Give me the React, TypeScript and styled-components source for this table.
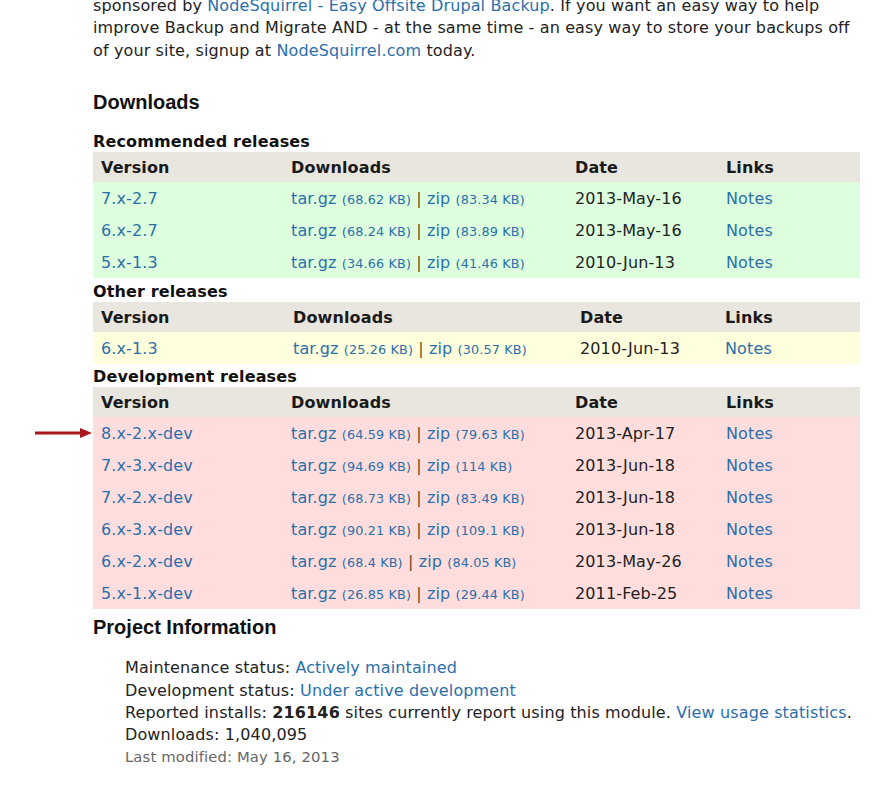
import React from "react";
import styled, { createGlobalStyle } from "styled-components";

const Global = createGlobalStyle`
  html, body { margin: 0; padding: 0; background: #fff; }
  body { font-family: "DejaVu Sans", sans-serif; font-size: 16px; letter-spacing: 0.13px; color: #222; overflow: hidden; }
`;

const Page = styled.div`
  width: 767px;
  margin-left: 93px;
  padding-bottom: 40px;
`;

const Intro = styled.p`
  margin: -5px 0 0;
  line-height: 22.4px;
  width: 767px;
`;

const Link = styled.a`
  color: #2b6faa;
  text-decoration: none;
`;

const H2 = styled.h2<{ $mt: number }>`
  font-family: "Liberation Sans", Arial, sans-serif;
  font-weight: bold;
  font-size: 20px;
  line-height: 24px;
  letter-spacing: 0;
  color: #111;
  margin: ${(p) => p.$mt}px 0 0;
`;

const H3 = styled.h3<{ $mt: number }>`
  font-family: "DejaVu Sans", sans-serif;
  font-weight: bold;
  font-size: 16px;
  line-height: 21px;
  padding-top: 1px;
  color: #111;
  margin: ${(p) => p.$mt}px 0 0;
`;

const Table = styled.table`
  width: 767px;
  border-collapse: collapse;
  table-layout: fixed;
`;

const Th = styled.th`
  background: #e8e6de;
  text-align: left;
  font-weight: bold;
  height: 29px;
  padding: 1px 0 0 8px;
  color: #1a1a1a;
  vertical-align: middle;
`;

const Tr = styled.tr<{ $bg: string }>`
  background: ${(p) => p.$bg};
`;

const Td = styled.td`
  height: 32px;
  padding: 0 0 0 8px;
  vertical-align: middle;
  white-space: nowrap;
  color: #222;
`;

const VersionCell = styled(Td)`
  position: relative;
`;

const Arrow = styled.svg`
  position: absolute;
  left: -58px;
  top: 11px;
`;

const Size = styled.span`
  font-size: 12.8px;
  color: #2b6faa;
`;

const Sep = styled.span`
  color: #6b4a26;
`;

const Info = styled.div`
  margin: 18px 0 0 32px;
  line-height: 22.3px;
`;

const Line = styled.div``;

const Muted = styled.div`
  color: #666;
  font-size: 14.8px;
`;

type Row = { v: string; tg: string; zp: string; date: string; arrow?: boolean };

const recommended: Row[] = [
  { v: "7.x-2.7", tg: "68.62 KB", zp: "83.34 KB", date: "2013-May-16" },
  { v: "6.x-2.7", tg: "68.24 KB", zp: "83.89 KB", date: "2013-May-16" },
  { v: "5.x-1.3", tg: "34.66 KB", zp: "41.46 KB", date: "2010-Jun-13" },
];
const other: Row[] = [{ v: "6.x-1.3", tg: "25.26 KB", zp: "30.57 KB", date: "2010-Jun-13" }];
const dev: Row[] = [
  { v: "8.x-2.x-dev", tg: "64.59 KB", zp: "79.63 KB", date: "2013-Apr-17", arrow: true },
  { v: "7.x-3.x-dev", tg: "94.69 KB", zp: "114 KB", date: "2013-Jun-18" },
  { v: "7.x-2.x-dev", tg: "68.73 KB", zp: "83.49 KB", date: "2013-Jun-18" },
  { v: "6.x-3.x-dev", tg: "90.21 KB", zp: "109.1 KB", date: "2013-Jun-18" },
  { v: "6.x-2.x-dev", tg: "68.4 KB", zp: "84.05 KB", date: "2013-May-26" },
  { v: "5.x-1.x-dev", tg: "26.85 KB", zp: "29.44 KB", date: "2011-Feb-25" },
];

function Releases({ rows, bg, cols }: { rows: Row[]; bg: string; cols: number[] }) {
  return (
    <Table>
      <colgroup>
        {cols.map((w, i) => (
          <col key={i} style={{ width: w }} />
        ))}
      </colgroup>
      <thead>
        <tr>
          <Th>Version</Th>
          <Th>Downloads</Th>
          <Th>Date</Th>
          <Th>Links</Th>
        </tr>
      </thead>
      <tbody>
        {rows.map((r) => (
          <Tr key={r.v} $bg={bg}>
            <VersionCell>
              {r.arrow && (
                <Arrow width="57" height="10" viewBox="0 0 57 10">
                  <line x1="0" y1="5" x2="47" y2="5" stroke="#a8161b" strokeWidth="3" />
                  <polygon points="45,0 57,5 45,10" fill="#a8161b" />
                </Arrow>
              )}
              <Link href="#">{r.v}</Link>
            </VersionCell>
            <Td>
              <Link href="#">tar.gz</Link> <Size>({r.tg})</Size> <Sep>|</Sep>{" "}
              <Link href="#">zip</Link> <Size>({r.zp})</Size>
            </Td>
            <Td>{r.date}</Td>
            <Td>
              <Link href="#">Notes</Link>
            </Td>
          </Tr>
        ))}
      </tbody>
    </Table>
  );
}

export default function App() {
  return (
    <>
      <Global />
      <Page>
        <Intro>
          sponsored by <Link href="#">NodeSquirrel - Easy Offsite Drupal Backup</Link>. If you want an easy way to help
          improve Backup and Migrate AND - at the same time - an easy way to store your backups off of your site, signup
          at <Link href="#">NodeSquirrel.com</Link> today.
        </Intro>
        <H2 $mt={28}>Downloads</H2>
        <H3 $mt={16}>Recommended releases</H3>
        <Releases rows={recommended} bg="#ddffdd" cols={[190, 284, 151, 142]} />
        <H3 $mt={2}>Other releases</H3>
        <Releases rows={other} bg="#ffffdd" cols={[192, 287, 145, 143]} />
        <H3 $mt={1}>Development releases</H3>
        <Releases rows={dev} bg="#ffdddd" cols={[190, 284, 151, 142]} />
        <H2 $mt={6}>Project Information</H2>
        <Info>
          <Line>
            Maintenance status: <Link href="#">Actively maintained</Link>
          </Line>
          <Line>
            Development status: <Link href="#">Under active development</Link>
          </Line>
          <Line>
            Reported installs: <b>216146</b> sites currently report using this module.{" "}
            <Link href="#">View usage statistics</Link>.
          </Line>
          <Line>Downloads: 1,040,095</Line>
          <Muted>Last modified: May 16, 2013</Muted>
        </Info>
      </Page>
    </>
  );
}
